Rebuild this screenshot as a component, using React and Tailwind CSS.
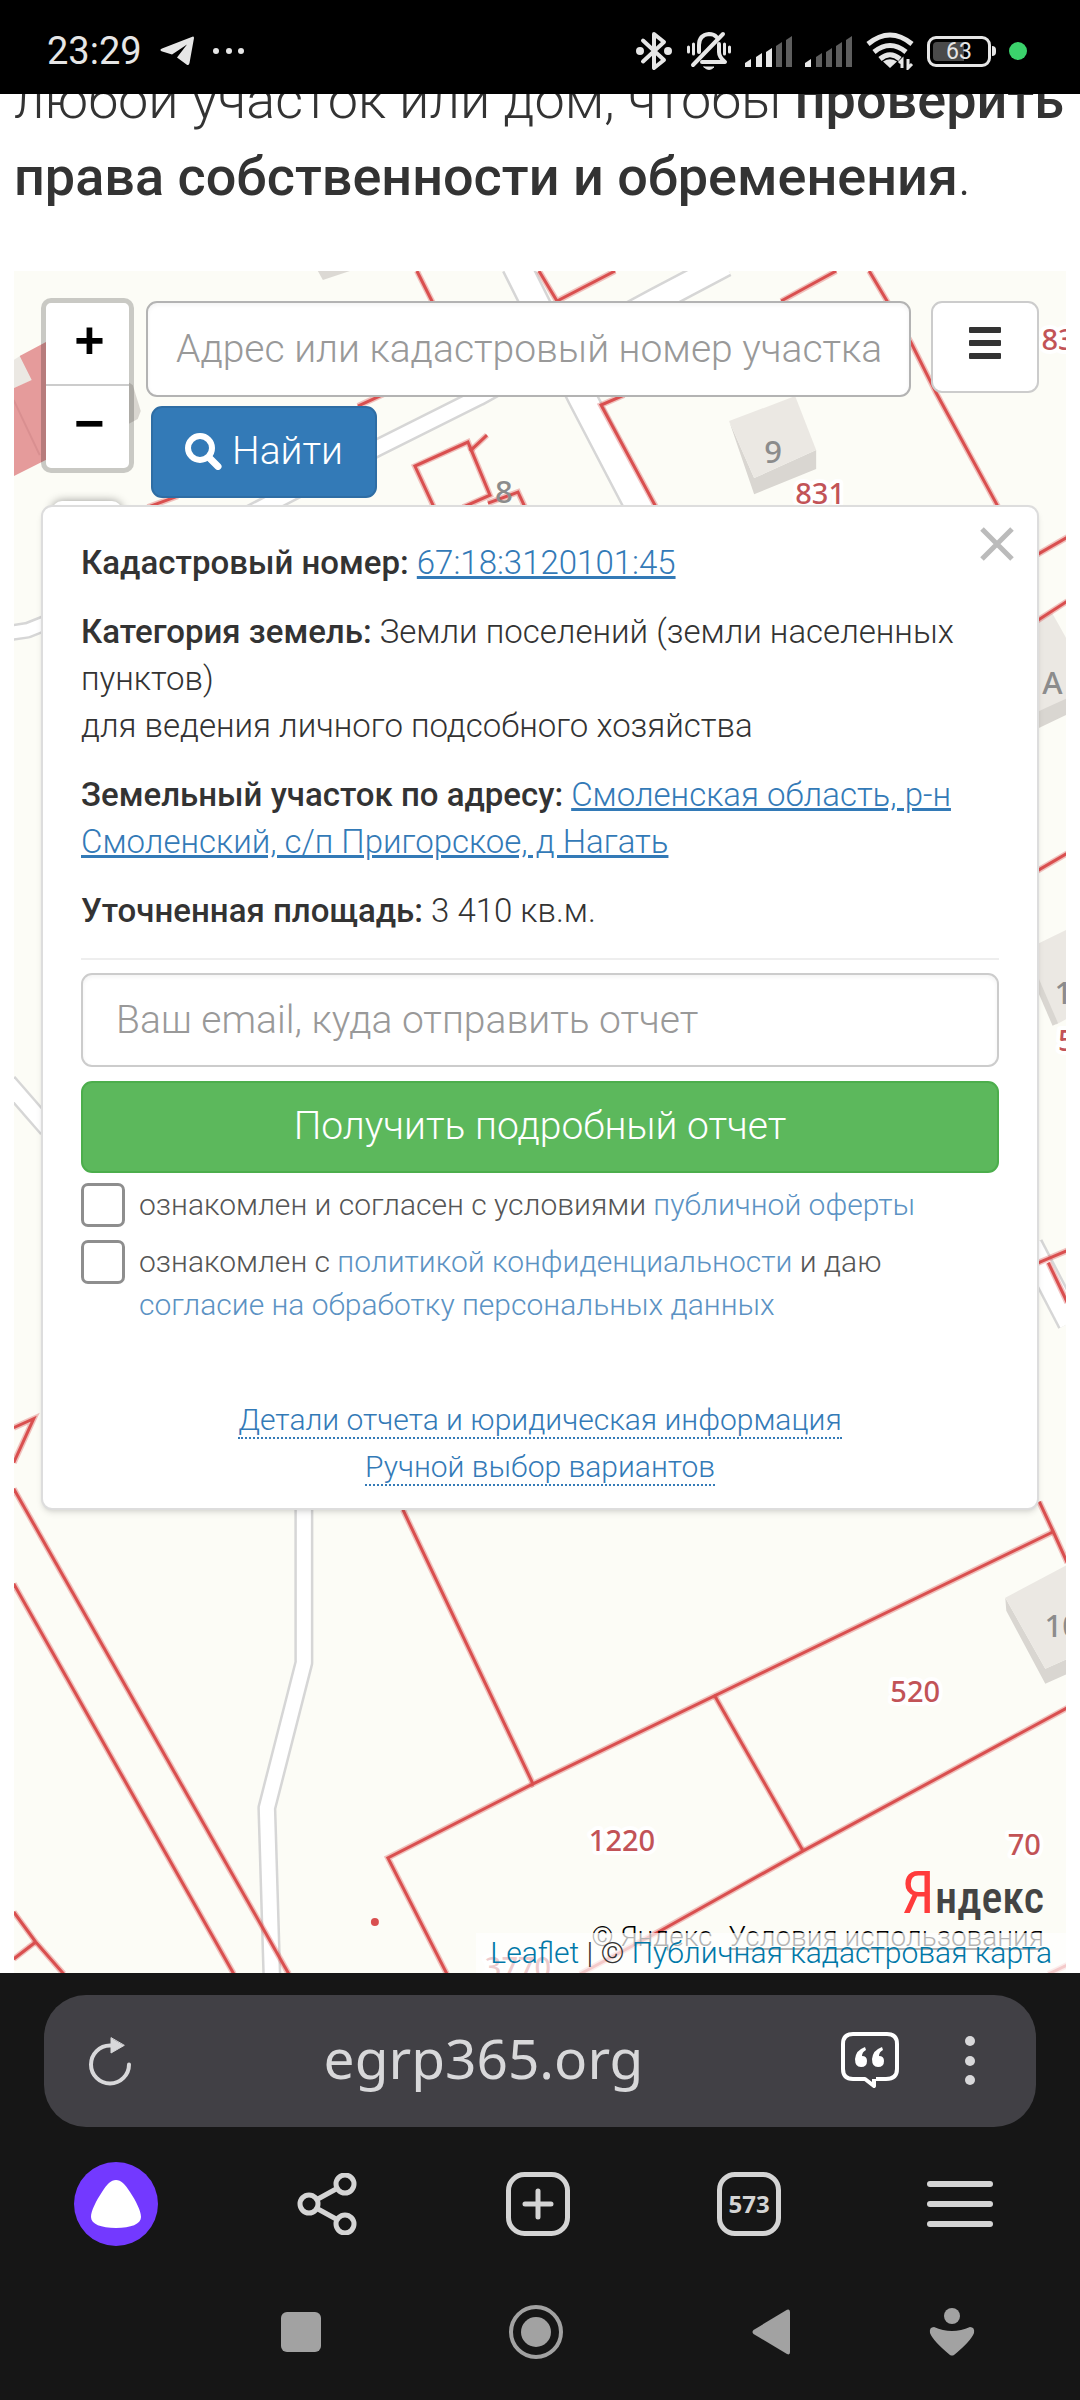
import React from "react";

const parcels = [
    "417,271 433,303",
    "539,271 557,301 615,271",
    "781,301 836,271",
    "869,271 888,303 911,343 936,393 998,507",
    "656,507 601,405 624,395",
    "358,406 384,394",
    "148,507 178,496",
    "434,507 415,466 468,442 490,495 463,507",
    "470,451 487,435",
    "488,503 518,492 525,507",
    "1036,555 1067,537",
    "1036,621 1067,601",
    "1036,871 1067,853",
    "1036,1263 1067,1250",
    "1048,1262 1067,1302",
    "14,1427 34,1418 14,1462",
    "14,1488 289,1973",
    "14,1583 234,1973",
    "14,1911 36,1941 64,1973",
    "36,1941 14,1958",
    "403,1509 533,1783 1053,1531",
    "533,1783 388,1857 447,1973",
    "1039,1501 1053,1531 1067,1562",
    "714,1694 803,1850",
    "1067,1707 803,1850 660,1930 580,1973",
    "1048,1973 1067,1964",
];

const roads = [
    { points: "304,1500 304,1662 267,1807 272,1974", size: 16 },
    { points: "8,633 28,630 48,622", size: 14 },
    { points: "8,1082 48,1128", size: 17 },
    { points: "1030,1245 1070,1322", size: 24 },
    { points: "240,519 377,448 479,397 600,330", size: 16 },
    { points: "590,336 655,301 725,264", size: 24 },
    { points: "516,265 582,397 642,512", size: 28 },
];

const parcelLabels = [
    { x: 820, y: 504, text: "831" },
    { x: 1066, y: 350, text: "831" },
    { x: 915, y: 1701, text: "520" },
    { x: 622, y: 1850, text: "1220" },
    { x: 1024, y: 1854, text: "70" },
    { x: 1066, y: 1051, text: "5" },
    { x: 518, y: 1977, text: "3770" },
];

const houseLabels = [
    { x: 773, y: 463, text: "9" },
    { x: 504, y: 503, text: "8" },
    { x: 1052, y: 694, text: "А" },
    { x: 1063, y: 1004, text: "1" },
    { x: 1062, y: 1636, text: "10" },
];

function CadastralMap() {
    return (
        <svg
            className="absolute inset-0 h-full w-full"
            viewBox="14 271 1052 1701"
            preserveAspectRatio="xMidYMin slice"
            aria-hidden="true"
        >
            <rect x="14" y="271" width="1052" height="1701" fill="#fcfcf6" />

            {roads.map((road) => (
                <g key={road.points} fill="none" strokeLinejoin="round">
                    <polyline points={road.points} stroke="#d6d6d6" strokeWidth={road.size + 3} />
                    <polyline points={road.points} stroke="#ffffff" strokeWidth={road.size - 2} />
                </g>
            ))}

            {/* buildings */}
            <path d="M318 271L323 280L350 271Z" fill="#dcd9d4" />
            <path d="M14 360L22 355L33 380L14 388Z" fill="#ebe8e3" />
            <path d="M20 356L50 340V458L14 476V388L32 380Z" fill="#e59b9b" />
            <path d="M14 400L40 455" stroke="#d98f90" strokeWidth="2" />
            <path d="M125 380L133 385L141 411L138 419L125 426Z" fill="#d9d6d0" />
            <path d="M729 421L754 478L816 450V469L754 494Z" fill="#d9d6d1" />
            <path d="M729 421L795 396L816 450L754 478Z" fill="#ebe8e3" />
            <path d="M1036 621L1052 613L1067 640V700L1036 712Z" fill="#ebe8e3" />
            <path d="M1036 712L1067 698V714L1036 729Z" fill="#d9d6d1" />
            <path d="M1036 944L1067 929V1018L1056 1024L1036 988Z" fill="#ebe8e3" />
            <path d="M1036 980L1055 1024" stroke="#d9d6d1" strokeWidth="6" />
            <path d="M1005 1597L1045 1668L1067 1658V1673L1045 1683L1006 1610Z" fill="#d9d6d1" />
            <path d="M1005 1597L1067 1564V1658L1045 1668Z" fill="#ebe8e3" />

            {parcels.map((points) => (
                <g key={points} fill="none" stroke="#d94f4f">
                    <polyline points={points} strokeWidth="6" opacity="0.35" />
                    <polyline points={points} strokeWidth="3" />
                </g>
            ))}
            <circle cx="375" cy="1921" r="4" fill="#d94f4f" />

            <g fontFamily="'Noto Sans', sans-serif" fontWeight="500" textAnchor="middle">
                {parcelLabels.map((label) => (
                    <text
                        key={`${label.x}-${label.y}`}
                        x={label.x}
                        y={label.y}
                        fontSize="29"
                        fill="#c25357"
                        stroke="#ffffff"
                        strokeWidth="8"
                        strokeLinejoin="round"
                        paintOrder="stroke"
                    >
                        {label.text}
                    </text>
                ))}
                {houseLabels.map((label) => (
                    <text key={`${label.x}-${label.y}`} x={label.x} y={label.y} fontSize="31" fill="#8c8c8c">
                        {label.text}
                    </text>
                ))}
            </g>
        </svg>
    );
}

function SignalIcon({ level }) {
    const bars = [
        "M0 31V27L6 23V31Z",
        "M11 31V21L17 17V31Z",
        "M21 31V16L27 12V31Z",
        "M31 31V10L37 6V31Z",
        "M41 31V4L47 0V31Z",
    ];

    return (
        <svg width="48" height="31" viewBox="0 0 48 31" className="shrink-0">
            {bars.map((d, index) => (
                <path key={d} d={d} fill={index < level ? "#e8e8e8" : "#5e5e5e"} />
            ))}
        </svg>
    );
}

function StatusBar() {
    return (
        <div className="relative z-10 flex h-[94px] items-center bg-black pt-2 pr-[53px] pl-[47px] text-[#e6e6e6]">
            <span className="text-[38px] leading-none">23:29</span>
            <svg width="34" height="30" viewBox="0 0 34 30" className="ml-[18px]" fill="#e6e6e6">
                <path d="M33 0.5Q34 0.300 34 2L29.500 27Q29 30 26.500 28.500L17 21.500L27 8.500L12 18.500L1.500 15.200Q-1 14 2 12.500Z" />
            </svg>
            <svg width="34" height="6" viewBox="0 0 34 6" className="ml-[18px]" fill="#e6e6e6">
                <circle cx="4" cy="3" r="3" />
                <circle cx="17" cy="3" r="3" />
                <circle cx="29" cy="3" r="3" />
            </svg>

            <div className="ml-auto flex items-center">
                <svg width="36" height="40" viewBox="0 0 36 40" fill="none" stroke="#e6e6e6" strokeWidth="4" strokeLinecap="round" strokeLinejoin="round">
                    <path d="M7 9.500L28 29L18 37V3L28 11L7 30.500" />
                    <circle cx="4" cy="20" r="2" fill="#e6e6e6" />
                    <circle cx="32" cy="20" r="2" fill="#e6e6e6" />
                </svg>
                <svg width="44" height="40" viewBox="0 0 44 40" className="ml-[15px]" fill="none" stroke="#e6e6e6" strokeWidth="4" strokeLinecap="round">
                    <path d="M12 21V14Q12 4 22 3Q27 3 29.500 6" />
                    <path d="M32 13V21Q32 26 38 31H15" strokeLinejoin="round" />
                    <path d="M36 3L6 34" />
                    <path d="M17 36H27Q22 41 17 36Z" fill="#e6e6e6" strokeWidth="1" />
                    <path d="M6.500 13V23M37.500 13V23" strokeWidth="3" />
                    <path d="M1.500 16V21M42.500 16V21" strokeWidth="3" />
                </svg>
                <div className="ml-[14px]"><SignalIcon level={3} /></div>
                <div className="ml-[12px]"><SignalIcon level={1} /></div>
                <svg width="48" height="38" viewBox="0 0 48 38" className="ml-[13px]" fill="none" stroke="#e6e6e6" strokeWidth="5">
                    <path d="M2 12Q24 -6 46 12" />
                    <path d="M8 20Q24 7 40 20" />
                    <path d="M14 27Q24 18.500 34 27" />
                    <path d="M17 29.500Q24 25 31 29.500L24 36Z" fill="#e6e6e6" stroke="none" />
                    <path d="M36 36V28L33 31M42 27V36L46 32" strokeWidth="3" />
                </svg>
                <div className="ml-[13px] flex h-[31px] w-[64px] items-center justify-center rounded-[9px] border-[3px] border-[#e6e6e6] bg-black p-[3px]">
                    <span className="flex h-full w-full items-center justify-center rounded-[4px] bg-linear-to-r from-[#4a4a4a] from-60% to-black to-60% text-[23px] leading-none">63</span>
                </div>
                <div className="ml-[1px] h-[10px] w-[4px] rounded-r bg-[#e6e6e6]" />
                <div className="ml-[13px] h-[18px] w-[18px] rounded-full bg-[#3bd36c]" />
            </div>
        </div>
    );
}

function MapControls() {
    return (
        <div className="flex items-start">
            <div className="flex w-[93px] flex-col overflow-hidden rounded-[10px] border-[5px] border-black/20 bg-white bg-clip-padding font-['Liberation_Sans',sans-serif] text-[52px] font-bold text-black">
                <button type="button" className="h-[83px] border-b-2 border-[#ccc] pb-2 pl-1 leading-none">+</button>
                <button type="button" className="h-[82px] pb-2 pl-1 leading-none">−</button>
            </div>

            <form className="mt-[3px] ml-[12px] flex-1" onSubmit={(e) => e.preventDefault()}>
                <div className="flex items-start gap-[20px]">
                    <input
                        type="text"
                        aria-label="Адрес или кадастровый номер участка"
                        placeholder="Адрес или кадастровый номер участка"
                        className="h-[96px] min-w-0 flex-1 rounded-[11px] border-2 border-[#b3b3b3] bg-white px-[28px] text-[39px] font-light text-[#555] inset-shadow-sm placeholder:text-[#999]"
                    />
                    <button type="button" aria-label="Меню" className="flex h-[92px] w-[108px] items-center justify-center rounded-[11px] border-2 border-[#ccc] bg-white pb-2">
                        <svg width="32" height="32" viewBox="0 0 32 32" fill="#333">
                            <rect width="32" height="6" rx="1" />
                            <rect y="13" width="32" height="6" rx="1" />
                            <rect y="26" width="32" height="6" rx="1" />
                        </svg>
                    </button>
                </div>
                <button type="submit" className="mt-[9px] ml-[5px] flex h-[92px] w-[226px] items-center justify-center gap-[10px] rounded-[11px] border-2 border-[#2e6da4] bg-[#337ab7] pb-[2px] text-[39px] font-light text-white">
                    <svg width="37" height="37" viewBox="0 0 37 37" fill="none" stroke="#ffffff" strokeLinecap="round">
                        <circle cx="15" cy="15" r="12" strokeWidth="6" />
                        <path d="M24.500 25L33 33.500" strokeWidth="7" />
                    </svg>
                    Найти
                </button>
            </form>
        </div>
    );
}

function ParcelCard() {
    return (
        <div className="relative mt-[7px] rounded-[11px] border-2 border-[#ddd] bg-white px-[38px] pt-[32px] pb-[18px] shadow-md">
            <button type="button" aria-label="Закрыть" className="absolute top-[20px] right-[23px]">
                <svg width="34" height="34" viewBox="0 0 34 34" stroke="#bbbbbb" strokeWidth="5">
                    <path d="M2 2L32 32M32 2L2 32" />
                </svg>
            </button>

            <div className="space-y-[22px] text-[33px] leading-[47px] font-light text-[#333]">
                <p>
                    <strong className="font-medium">Кадастровый номер:</strong>{" "}
                    <a href="#number" className="text-[#337ab7] underline">67:18:3120101:45</a>
                </p>
                <p>
                    <strong className="font-medium">Категория земель:</strong> Земли поселений (земли населенных пунктов)
                    <br />
                    для ведения личного подсобного хозяйства
                </p>
                <p>
                    <strong className="font-medium">Земельный участок по адресу:</strong>{" "}
                    <a href="#address" className="text-[#337ab7] underline">Смоленская область, р-н Смоленский, с/п Пригорское, д Нагать</a>
                </p>
                <p>
                    <strong className="font-medium">Уточненная площадь:</strong> 3 410 кв.м.
                </p>
            </div>

            <hr className="mt-[24px] border-t-2 border-[#eee]" />

            <form onSubmit={(e) => e.preventDefault()}>
                <input
                    type="email"
                    aria-label="Ваш email, куда отправить отчет"
                    placeholder="Ваш email, куда отправить отчет"
                    className="mt-[13px] h-[94px] w-full rounded-[11px] border-2 border-[#ccc] bg-white px-[33px] text-[39px] font-light text-[#555] inset-shadow-sm placeholder:text-[#999]"
                />
                <button type="submit" className="mt-[14px] h-[92px] w-full rounded-[11px] border-2 border-[#4cae4c] bg-[#5cb85c] pb-[2px] text-[39px] font-light text-white">
                    Получить подробный отчет
                </button>

                <div className="mt-[10px] space-y-[13px] text-[30px] leading-[43px] font-light text-[#555]">
                    <div className="flex items-start gap-[14px]">
                        <input id="offer" type="checkbox" className="h-[44px] w-[44px] shrink-0 appearance-none rounded-[7px] border-3 border-[#8e8e8e] bg-white" />
                        <label htmlFor="offer">
                            ознакомлен и согласен с условиями <a href="#offer-text" className="text-[#5b92c3]">публичной оферты</a>
                        </label>
                    </div>
                    <div className="flex items-start gap-[14px]">
                        <input id="policy" type="checkbox" className="h-[44px] w-[44px] shrink-0 appearance-none rounded-[7px] border-3 border-[#8e8e8e] bg-white" />
                        <label htmlFor="policy">
                            ознакомлен с <a href="#policy-text" className="text-[#5b92c3]">политикой конфиденциальности</a> и даю{" "}
                            <a href="#consent" className="inline-block text-[#5b92c3]">согласие на обработку персональных данных</a>
                        </label>
                    </div>
                </div>
            </form>

            <div className="mt-[70px] text-center text-[30px] leading-[47px] font-light">
                <a href="#details" className="border-b-2 border-dotted border-[#337ab7] text-[#337ab7]">Детали отчета и юридическая информация</a>
                <br />
                <a href="#manual" className="border-b-2 border-dotted border-[#337ab7] text-[#337ab7]">Ручной выбор вариантов</a>
            </div>
        </div>
    );
}

function BrowserBar() {
    return (
        <div className="bg-[#161616] pt-[22px] pb-[17px]">
            <div className="mx-[44px] flex h-[132px] items-center rounded-[42px] bg-[#414045] pr-[61px] pl-[44px]">
                <button type="button" aria-label="Обновить">
                    <svg width="44" height="50" viewBox="0 0 44 50" fill="none" stroke="#d8d8da" strokeWidth="4" strokeLinecap="round">
                        <path d="M26 9.500H22A19 19 0 1 0 41 28.500" />
                        <path d="M23 2V17L36 9.500Z" fill="#d8d8da" strokeWidth="1" />
                    </svg>
                </button>
                <span className="flex-1 pr-[6px] pb-2 text-center font-['Noto_Sans',sans-serif] text-[55px] leading-none text-[#d8d8da]">egrp365.org</span>
                <button type="button" aria-label="Отзывы">
                    <svg width="58" height="58" viewBox="0 0 58 58" fill="none" stroke="#ffffff" strokeWidth="4">
                        <path d="M35 47H45Q56 47 56 37V12Q56 2 46 2H12Q2 2 2 12V37Q2 47 12 47H24L33 54V47" strokeLinejoin="round" />
                        <path d="M24 15Q15 18 14 27Q14 35 20 35Q26 35 26 29Q26 24 21 24Q21 20 25 18ZM41 15Q32 18 31 27Q31 35 37 35Q43 35 43 29Q43 24 38 24Q38 20 42 18Z" fill="#ffffff" stroke="none" />
                    </svg>
                </button>
                <button type="button" aria-label="Ещё" className="ml-[66px]">
                    <svg width="10" height="50" viewBox="0 0 10 50" fill="#d8d8da">
                        <circle cx="5" cy="5" r="5" />
                        <circle cx="5" cy="25" r="5" />
                        <circle cx="5" cy="44" r="5" />
                    </svg>
                </button>
            </div>

            <div className="grid h-[154px] grid-cols-5 items-center justify-items-center pr-[14px] pl-[10px]">
                <button type="button" aria-label="Алиса" className="flex h-[84px] w-[84px] items-center justify-center rounded-full bg-[#7339ff]">
                    <svg width="50" height="48" viewBox="0 0 50 48" fill="#ffffff">
                        <path d="M25 0C30 0 34 4 39 12C45 21 50 31 50 37C50 44 40 48 25 48S0 44 0 37C0 31 5 21 11 12C16 4 20 0 25 0Z" />
                    </svg>
                </button>
                <button type="button" aria-label="Поделиться">
                    <svg width="60" height="62" viewBox="0 0 60 62" fill="none" stroke="#d4d4d4" strokeWidth="5">
                        <circle cx="12" cy="31" r="9" />
                        <circle cx="48" cy="11" r="9" />
                        <circle cx="48" cy="51" r="9" />
                        <path d="M20 26.500L40 15.500M20 35.500L40 46.500" />
                    </svg>
                </button>
                <button type="button" aria-label="Новая вкладка">
                    <svg width="64" height="64" viewBox="0 0 64 64" fill="none" stroke="#d4d4d4" strokeWidth="5" strokeLinecap="round">
                        <rect x="2.500" y="2.500" width="59" height="59" rx="16" />
                        <path d="M32 19V45M19 32H45" />
                    </svg>
                </button>
                <button type="button" aria-label="Вкладки" className="flex h-[64px] w-[64px] items-center justify-center rounded-[18px] border-[5px] border-[#d4d4d4] font-['Noto_Sans',sans-serif] text-[24px] leading-none font-bold text-[#d4d4d4]">
                    573
                </button>
                <button type="button" aria-label="Меню браузера" className="flex w-[66px] flex-col gap-[14px]">
                    <span className="h-[6px] rounded-full bg-[#d4d4d4]" />
                    <span className="h-[6px] rounded-full bg-[#d4d4d4]" />
                    <span className="h-[6px] rounded-full bg-[#d4d4d4]" />
                </button>
            </div>

            <div className="flex h-[102px] items-center pr-[105px] pl-[26%]">
                <div className="flex flex-1 items-center justify-between">
                    <button type="button" aria-label="Недавние" className="h-[40px] w-[40px] rounded-[6px] bg-[#a2a2a2]" />
                    <button type="button" aria-label="Домой" className="flex h-[54px] w-[54px] items-center justify-center rounded-full border-4 border-[#a2a2a2]">
                        <span className="h-[30px] w-[30px] rounded-full bg-[#a2a2a2]" />
                    </button>
                    <button type="button" aria-label="Назад">
                        <svg width="38" height="46" viewBox="0 0 38 46" fill="#a2a2a2">
                            <path d="M35 0.800Q38 -0.500 38 3V43Q38 46.500 35 45L1.500 25Q-0.500 23 1.500 21Z" />
                        </svg>
                    </button>
                </div>
                <button type="button" aria-label="Спец. возможности" className="ml-[139px]">
                    <svg width="46" height="48" viewBox="0 0 46 48" fill="#a2a2a2">
                        <circle cx="23" cy="8" r="8" />
                        <path d="M5 19Q14 23 23 23Q32 23 41 19Q46 19 45 25Q42 33 25 47Q23 48 21 47Q4 33 1 25Q0 19 5 19Z" />
                    </svg>
                </button>
            </div>
        </div>
    );
}

export default function App() {
    return (
        <div className="flex min-h-screen flex-col bg-white font-['Roboto',sans-serif]">
            <StatusBar />

            <p className="-mt-[33px] px-[14px] pb-[56px] text-[54px] leading-[77px] font-light text-[#333]">
                любой участок или дом, чтобы <strong className="font-medium">проверить права собственности и обременения</strong>.
            </p>

            <main className="relative mx-[14px] flex-1 overflow-hidden">
                <CadastralMap />
                {/* layer switcher, mostly covered by the card */}
                <div className="absolute top-[230px] left-[38px] h-[40px] w-[70px] rounded-[10px] bg-white shadow-[0_0_10px_rgba(0,0,0,0.4)]" />

                <div className="relative px-[27px] pt-[27px] pb-[462px]">
                    <MapControls />
                    <ParcelCard />
                </div>

                <div className="absolute right-[22px] bottom-[45px] font-['Liberation_Sans_Narrow','Roboto_Condensed','Noto_Sans',sans-serif] text-[44px] leading-[60px] font-medium text-[#444]">
                    <span className="text-[60px] font-normal text-[#ff3b3b]">Я</span>ндекс
                </div>
                <div className="absolute right-[22px] bottom-[19px] flex gap-[16px] text-[28px] leading-[34px] font-light text-black">
                    <span>© Яндекс</span>
                    <a href="#terms" className="underline">Условия использования</a>
                </div>
                <div className="absolute right-0 bottom-0 bg-white/70 pr-[14px] pl-[14px] text-[30px] leading-[40px] font-light text-[#333]">
                    <a href="#leaflet" className="text-[#0078a8]">Leaflet</a> | © <a href="#pkk" className="text-[#0078a8]">Публичная кадастровая карта</a>
                </div>
            </main>

            <BrowserBar />
        </div>
    );
}
